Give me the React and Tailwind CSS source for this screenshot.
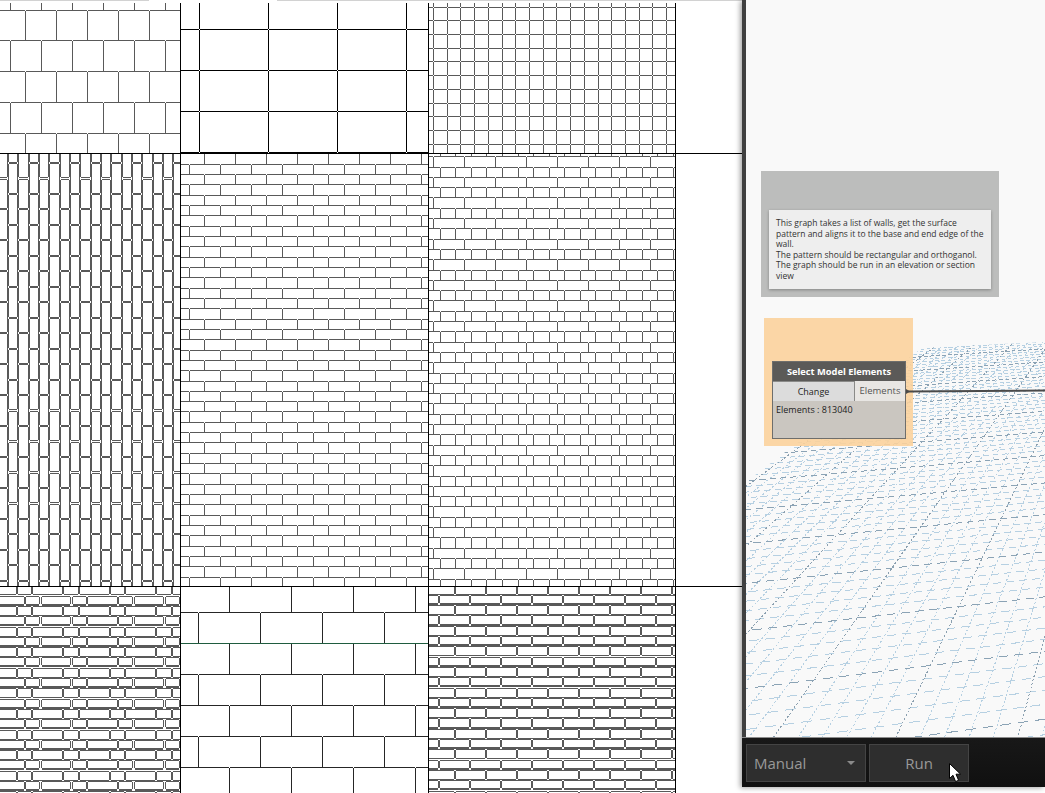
import { Fragment } from 'react';

const GRAY = '#595959';

const hl = (x1, x2, y) => `M${x1} ${y}H${x2}V${y + 1}H${x1}Z`;
const vl = (x, y1, y2) => `M${x} ${y1}V${y2}H${x + 1}V${y1}Z`;

// horizontal lines + staggered joints, one 1px line per joint
function thinBond({ x, y, w, h, yStart, yStep, rows }) {
  let d = '';
  const bottom = y + h;
  for (let r = 0; ; r++) {
    const top = r === 0 ? y : Math.floor(yStart + (r - 1) * yStep);
    if (top >= bottom) break;
    const low = Math.min(Math.floor(yStart + r * yStep), bottom);
    if (low < bottom) d += hl(x, x + w, low);
    const row = rows[r % rows.length];
    for (let px = row.start; px < x + w; px += row.step) {
      if (px >= x) d += vl(Math.floor(px), top, low);
    }
  }
  return d;
}

// every brick is its own inset outline, which gives the doubled joints
function brickBox(x1, y1, x2, y2, heavy = false) {
  const i = 0.6;
  const l = Math.floor(x1 + i);
  const r = Math.floor(x2 - i);
  const t = Math.floor(y1 + i);
  const b = Math.floor(y2 - i);
  if (r <= l || b <= t) return '';
  let d = hl(l, r + 1, t) + hl(l, r + 1, b) + vl(l, t, b + 1) + vl(r, t, b + 1);
  if (heavy) d += hl(l, r + 1, b - 1);
  return d;
}

function doubleBond({ x, y, w, h, yStart, yStep, rows }) {
  let d = '';
  for (let r = 0; ; r++) {
    const top = yStart + (r - 1) * yStep;
    if (top >= y + h) break;
    const row = rows[r % rows.length];
    let idx = 0;
    let a = row.start;
    while (a < x + w) {
      const gap = row.steps[idx % row.steps.length];
      // every other course reads a pixel heavier in the reference
      d += brickBox(a, top, a + gap, top + yStep, r % 2 === 1);
      a += gap;
      idx++;
    }
  }
  return d;
}

function stackBond({ x, y, w, h }) {
  let d = '';
  const colW = 10.33;
  for (let c = -1; 8 + c * colW < x + w; c++) {
    const left = 8 + c * colW;
    const start = (c + 1) % 2 === 1 ? 163 - 30.95 : 178.4 - 30.95;
    for (let b = start; b < y + h; b += 30.95) {
      d += brickBox(left, b, left + colW, b + 30.95);
    }
  }
  return d;
}

function gridLines({ x, y, w, h, xStart, xStep, yStart, yStep }) {
  let d = '';
  for (let px = xStart; px < x + w; px += xStep) d += vl(Math.floor(px), y, y + h);
  for (let py = yStart; py < y + h; py += yStep) d += hl(x, x + w, Math.floor(py));
  return d;
}

function Tile({ x, y, w, h, color = GRAY, d, children }) {
  return (
    <svg width={w} height={h} viewBox={`${x} ${y} ${w} ${h}`} shapeRendering="crispEdges" className="block">
      <path d={d} fill={color} />
      {children}
    </svg>
  );
}

// the 3d wall in the background: two vanishing points
const VP1 = [1167, 175];
const VP2 = [6000, 35];

function meshPaths() {
  const diag = (t) => {
    const x718 = 1023 - 23.6 * t;
    return (x718 - VP1[0]) / (718 - VP1[1]);
  };
  const at = (k, t) => {
    const y0 = 100 + 1 / (0.002439 - 0.000185 * k);
    const m = (VP2[1] - y0) / (VP2[0] - 745);
    const a = diag(t);
    const py = (y0 + m * (VP1[0] - a * VP1[1] - 745)) / (1 - m * a);
    return [VP1[0] + a * (py - VP1[1]), py];
  };
  const seg = (k, t1, t2) => {
    const p = at(k, t1);
    const q = at(k, t2);
    return `M${p[0].toFixed(1)} ${p[1].toFixed(1)}L${q[0].toFixed(1)} ${q[1].toFixed(1)}`;
  };
  let lightH = '';
  let darkH = '';
  let lightD = '';
  let darkD = '';
  for (let i = -50; i <= 40; i++) {
    const k = i * 0.2;
    const dark = i % 5 === 0;
    const off = i % 2 === 0 ? 0 : 0.35;
    for (let t = -2; t < 26; t += 0.7) {
      if (dark) darkH += seg(k, t + off, t + off + 0.42);
      else lightH += seg(k, t + off, t + off + 0.42);
    }
  }
  for (let t = -1; t <= 25; t++) {
    const x718 = 1023 - 23.6 * t;
    const a = diag(t);
    const line = `M${(VP1[0] + a * (300 - VP1[1])).toFixed(1)} 300L${(x718 + a * 22).toFixed(1)} 740`;
    if (t % 5 === 0) darkD += line;
    else lightD += line;
  }
  return { lightH, darkH, lightD, darkD };
}

const mesh = meshPaths();

const tileRows = [
  [
    {
      x: 0, y: 3, w: 180, h: 150,
      d: thinBond({
        x: 0, y: 3, w: 180, h: 150, yStart: 10, yStep: 30.77,
        rows: [{ start: 10.3, step: 31 }, { start: 25.3, step: 31 }],
      }),
    },
    {
      x: 181, y: 3, w: 247, h: 150, color: '#000',
      d: gridLines({ x: 181, y: 3, w: 247, h: 150, xStart: 199, xStep: 69, yStart: 29, yStep: 41 }),
    },
    {
      x: 429, y: 3, w: 246, h: 150,
      d: gridLines({ x: 429, y: 3, w: 246, h: 150, xStart: 433.4, xStep: 13.72, yStart: 7, yStep: 13.73 }),
    },
  ],
  [
    { x: 0, y: 154, w: 180, h: 432, d: stackBond({ x: 0, y: 154, w: 180, h: 432 }) },
    {
      x: 181, y: 154, w: 247, h: 432,
      d: thinBond({
        x: 181, y: 154, w: 247, h: 432, yStart: 164.3, yStep: 10.32,
        rows: [{ start: 204.3, step: 31 }, { start: 189.3, step: 31 }],
      }),
    },
    {
      x: 429, y: 154, w: 246, h: 432,
      d: thinBond({
        x: 429, y: 154, w: 246, h: 432, yStart: 156.7, yStep: 10.3,
        rows: [{ start: 440.3, step: 15.55 }, { start: 433.3, step: 31 }],
      }),
    },
  ],
  [
    {
      x: 0, y: 587, w: 180, h: 206,
      d: doubleBond({
        x: 0, y: 587, w: 180, h: 206, yStart: 595.5, yStep: 10.3,
        rows: [
          { start: -14.3, steps: [31, 15.5] },
          { start: -6, steps: [31, 15.5] },
        ],
      }),
    },
    {
      x: 181, y: 587, w: 247, h: 206, color: '#262626',
      d: thinBond({
        x: 181, y: 587, w: 247, h: 206, yStart: 612, yStep: 31,
        rows: [{ start: 229.3, step: 62 }, { start: 198.3, step: 62 }],
      }),
      children: <rect x="181" y="643" width="247" height="1" fill="#1f5c3f" />,
    },
    {
      x: 429, y: 587, w: 246, h: 206,
      d: doubleBond({
        x: 429, y: 587, w: 246, h: 206, yStart: 594.7, yStep: 10.3,
        rows: [
          { start: 423.7, steps: [31] },
          { start: 408.3, steps: [31] },
        ],
      }),
    },
  ],
];

function Cursor() {
  return (
    <svg width="14" height="20" viewBox="0 0 14 20" className="absolute left-[79px] top-[18px]">
      <path d="M.5.5V15.5L4 12.3 6.6 18.6 9.6 17.3 7 11.2H11.6Z" fill="#fff" stroke="#000" strokeWidth="1" />
    </svg>
  );
}

export default function App() {
  return (
    <div className="flex h-[793px] w-[1045px] overflow-hidden bg-white">
      {/* hatch sheet */}
      <div className="flex w-[742px] shrink-0 flex-col">
        <div className="flex h-[3px]">
          <div className="h-px w-[149px] bg-[#d2d2d2]" />
          <div className="w-[128px]" />
          <div className="h-px flex-1 bg-[#d2d2d2]" />
        </div>
        <div className="grid grid-cols-[181px_248px_247px_66px] grid-rows-[151px_433px_206px]">
          {tileRows.map((row, r) => (
            <Fragment key={r}>
              {row.map((t, c) => (
                <div key={c} className={r < 2 ? 'border-r border-b border-black' : 'border-r border-black'}>
                  <Tile {...t} />
                </div>
              ))}
              <div className={r < 2 ? 'border-b border-black' : ''} />
            </Fragment>
          ))}
        </div>
      </div>

      {/* dynamo window */}
      <div className="relative flex h-[787px] w-[303px] shrink-0 flex-col shadow-[-2px_1px_5px_rgba(0,0,0,0.35)]">
        <div className="relative h-[737px] overflow-hidden border-l-4 border-[#404040] bg-[#f9f9f9]">
          <svg width="299" height="737" viewBox="746 0 299 737" fill="none" className="absolute left-0 top-0">
            <defs>
              <clipPath id="wall">
                <polygon points="746,482 922,348 1045,342 1045,737 746,737" />
              </clipPath>
            </defs>
            <g clipPath="url(#wall)" shapeRendering="crispEdges" strokeWidth="1">
              <path d={mesh.lightD} stroke="#b6d0e2" strokeDasharray="2 2" />
              <path d={mesh.lightH} stroke="#b6d0e2" />
              <path d={mesh.darkD} stroke="#8ba0b0" strokeDasharray="2 2" />
              <path d={mesh.darkH} stroke="#8ba3b5" />
            </g>
          </svg>

          <div className="absolute left-[15px] top-[171px] h-[126px] w-[238px] bg-[#bcbdbc] px-2 pt-[39px]">
            <div className="h-[79px] bg-[#eeeeee] pl-[7px] pt-[8px] text-[8.5px] leading-[10.6px] whitespace-nowrap text-[#333] shadow-[0_1px_3px_rgba(0,0,0,0.3)] [font-family:'Open_Sans',sans-serif]">
              This graph takes a list of walls, get the surface
              <br />
              pattern and aligns it to the base and end edge of the
              <br />
              wall.
              <br />
              The pattern should be rectangular and orthoganol.
              <br />
              The graph should be run in an elevation or section
              <br />
              view
            </div>
          </div>

          <div className="absolute left-[18px] top-[318px] h-[128px] w-[149px] bg-[#fbd19c]/90 pl-2 pt-[43px]">
            <div className="flex h-[78px] w-[134px] flex-col border border-[#6e6e6c] bg-[#cac6c0] text-[9px] [font-family:'Open_Sans',sans-serif]">
              <div className="flex h-[19px] items-center justify-center bg-[#5b5a58] text-[9.3px] font-bold text-white">
                Select Model Elements
              </div>
              <div className="flex h-[20px]">
                <div className="flex w-[82px] items-center justify-center border-r border-t border-[#8a8a88] bg-[#dcdcdc] text-[#222]">
                  Change
                </div>
                <div className="flex flex-1 items-center justify-center bg-[#e8e6e3] text-[9.5px] text-[#555]">Elements</div>
              </div>
              <div className="pl-[3px] pt-[2px] text-[#222]">Elements : 813040</div>
            </div>
          </div>

          <svg width="299" height="737" viewBox="746 0 299 737" fill="none" className="pointer-events-none absolute left-0 top-0">
            <path d="M906 389V394L910 391.5Z" fill="#4a4a4a" />
            <path d="M908 391.5L1045 390.5" stroke="#4a4a4a" strokeWidth="2" />
          </svg>
        </div>

        {/* bottom bar */}
        <div className="relative flex h-[50px] items-start gap-[3px] border-t border-[#8c8c8c] bg-linear-to-b from-[#181818] to-[#101010] pl-1 pt-[6px] text-[15px] text-[#999] [font-family:'Open_Sans',sans-serif]">
          <div className="flex h-[38px] w-[120px] items-center justify-between border border-[#444] bg-[#2e2e2e] pl-[7px] pr-[10px]">
            <span>Manual</span>
            <svg width="8" height="4" viewBox="0 0 8 4">
              <path d="M0 0H8L4 4Z" fill="#8a8a8a" />
            </svg>
          </div>
          <div className="relative flex h-[38px] w-[100px] items-center justify-center border border-[#444] bg-[#2e2e2e]">
            Run
            <Cursor />
          </div>
        </div>
      </div>
    </div>
  );
}
